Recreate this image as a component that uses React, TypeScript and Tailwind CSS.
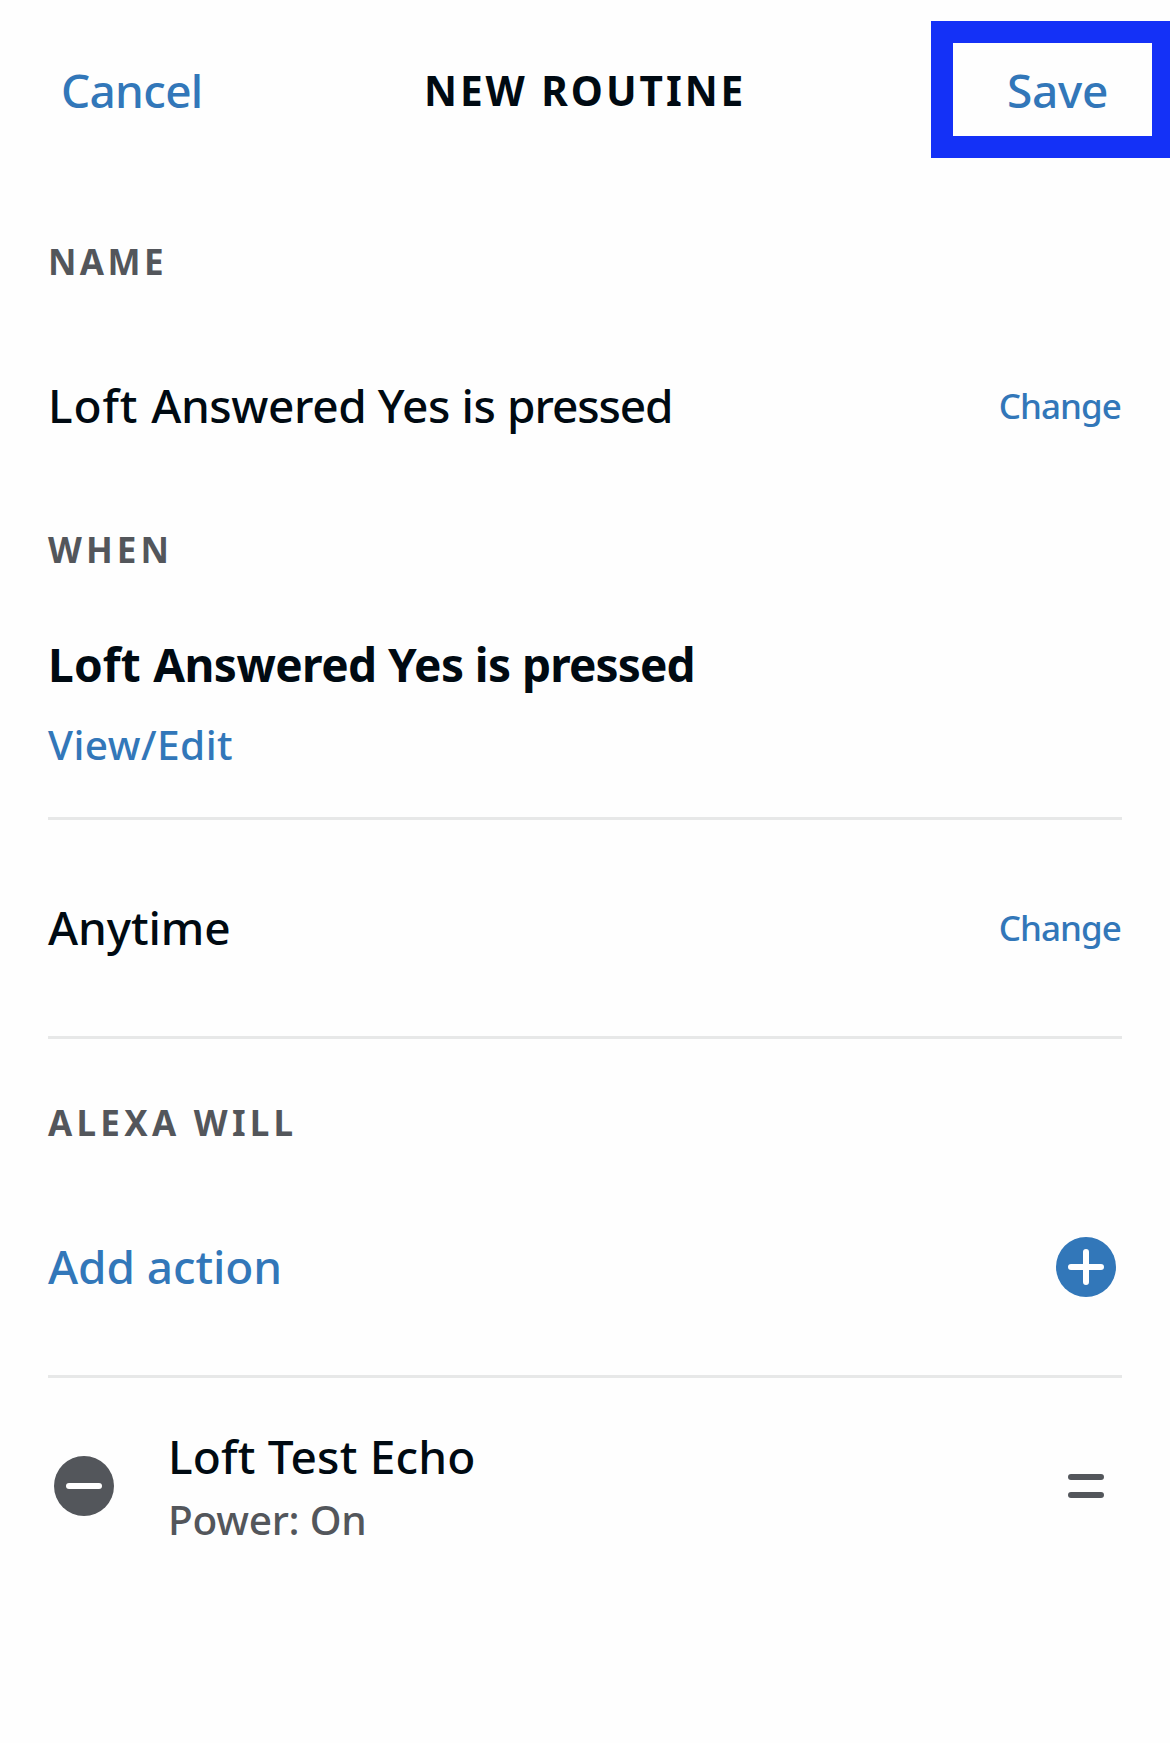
import type { ReactNode } from "react";

function SectionLabel({ children, className }: { children: ReactNode; className: string }) {
  return (
    <h2 className={`text-[35px] leading-[50px] font-bold whitespace-nowrap text-[#53565b] ${className}`}>
      {children}
    </h2>
  );
}

function ChangeLink() {
  return (
    <button className="pr-px text-[35px] leading-[50px] tracking-[-0.95px] text-[#3277b9]">
      Change
    </button>
  );
}

function Divider() {
  return <div className="h-[3px] bg-[#e7e8e8]" />;
}

function PlusIcon() {
  return (
    <svg width="60" height="60" viewBox="0 0 60 60" fill="none" aria-hidden="true">
      <circle cx="30" cy="30" r="30" fill="#3277b9" />
      <path d="M15 30h30M30 15v30" stroke="#fff" strokeWidth="6" strokeLinecap="round" />
    </svg>
  );
}

function MinusIcon() {
  return (
    <svg width="60" height="60" viewBox="0 0 60 60" fill="none" aria-hidden="true">
      <circle cx="30" cy="30" r="30" fill="#53565b" />
      <path d="M15 30h30" stroke="#fff" strokeWidth="6" strokeLinecap="round" />
    </svg>
  );
}

function DragHandleIcon() {
  return (
    <svg width="36" height="24" viewBox="0 0 36 24" fill="none" aria-hidden="true">
      <path d="M3 3h30M3 21h30" stroke="#53565b" strokeWidth="6" strokeLinecap="round" />
    </svg>
  );
}

export default function App() {
  return (
    <div className="h-[1743px] w-[1170px] overflow-hidden bg-[#fefefe] font-['Noto_Sans',sans-serif] font-medium text-[#000a12]">
      <header className="mt-[21px] grid h-[137px] grid-cols-[424px_507px_1fr] items-center">
        <button className="pl-[61px] text-left text-[46px] leading-[64px] tracking-[-0.7px] text-[#3277b9]">
          Cancel
        </button>
        <h1 className="pt-[3px] text-[40.6px] leading-[56px] font-bold tracking-[2.95px] whitespace-nowrap">
          NEW ROUTINE
        </h1>
        <div className="-mr-1 flex h-[137px] items-center border-x-[22px] border-y-[22px] border-[#1431f7] pl-[54px]">
          <button className="text-[46px] leading-[64px] tracking-[-0.3px] text-[#3277b9]">Save</button>
        </div>
      </header>

      <main className="px-12">
        <SectionLabel className="mt-[79px] tracking-[3.4px]">NAME</SectionLabel>
        <div className="mt-[58px] flex h-[120px] items-center justify-between">
          <p className="text-[46px] leading-[64px] tracking-[-0.4px]">
            <span className="tracking-[0.9px]">Loft </span>
            <span>Answered Yes is </span>
            <span className="tracking-[-1.1px]">pressed</span>
          </p>
          <div className="pt-0.5">
            <ChangeLink />
          </div>
        </div>

        <SectionLabel className="mt-[60px] tracking-[4.1px]">WHEN</SectionLabel>
        <p className="mt-[57px] text-[46px] leading-[64px] font-bold tracking-[-0.55px]">
          <span className="tracking-[0.2px]">Loft </span>
          <span>Answered Yes is </span>
          <span className="tracking-[-0.9px]">pressed</span>
        </p>
        <button className="mt-[21px] mb-11 block text-[40.6px] leading-[56px] tracking-[0.45px] text-[#3277b9]">
          View/Edit
        </button>
        <Divider />

        <div className="flex h-[216px] items-center justify-between">
          <p className="pb-0.5 text-[46px] leading-[64px] tracking-[-0.1px]">Anytime</p>
          <ChangeLink />
        </div>
        <Divider />

        <SectionLabel className="mt-[59px] tracking-[4.27px]">ALEXA WILL</SectionLabel>
        <div className="mt-[11px] flex h-[216px] items-center justify-between pr-1.5">
          <button className="pb-0.5 text-[46px] leading-[64px] tracking-[-0.1px] text-[#3277b9]">
            Add action
          </button>
          <button aria-label="Add action">
            <PlusIcon />
          </button>
        </div>
        <Divider />

        <div className="flex h-[216px] items-center pr-[18px] pl-1.5">
          <button aria-label="Remove action">
            <MinusIcon />
          </button>
          <div className="ml-[54px] flex-1">
            <p className="text-[46px] leading-[64px] tracking-[0.2px]">Loft Test Echo</p>
            <p className="mt-1 text-[40.6px] leading-[56px] tracking-[-0.27px] text-[#53565b]">Power: On</p>
          </div>
          <DragHandleIcon />
        </div>
      </main>
    </div>
  );
}
